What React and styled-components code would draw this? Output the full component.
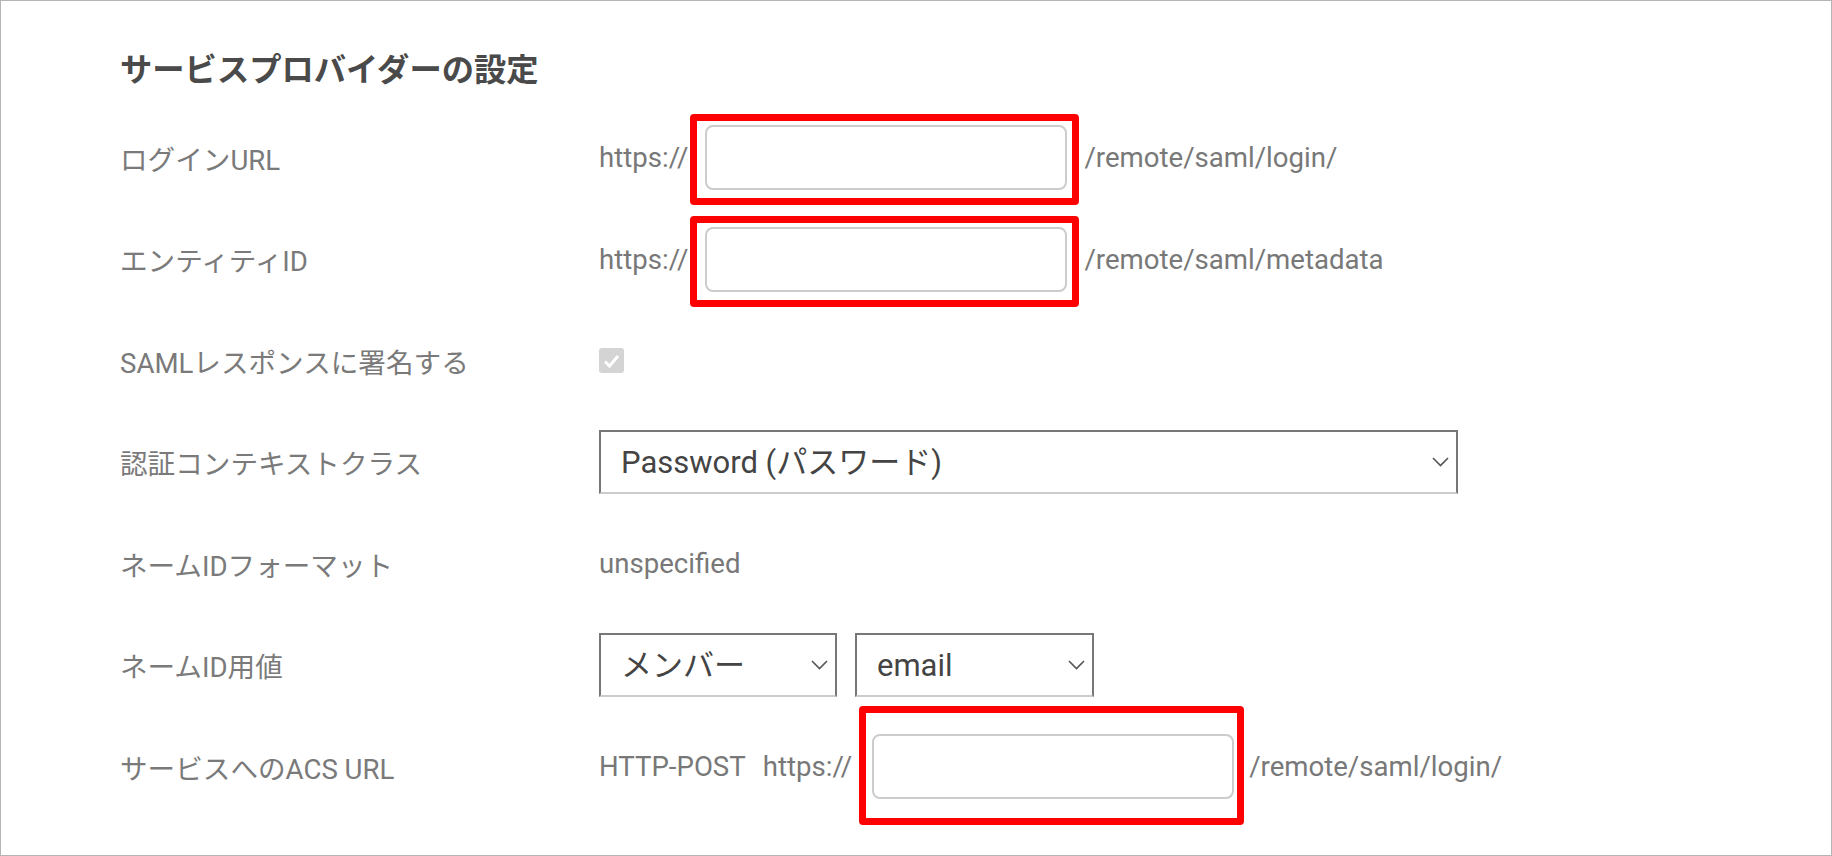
import React from 'react';
import styled, { createGlobalStyle } from 'styled-components';

const GlobalStyle = createGlobalStyle`
  html, body {
    margin: 0;
    padding: 0;
    background: #fff;
  }
  body {
    font-family: Roboto, "Noto Sans CJK JP", sans-serif;
  }
`;

// page frame
const Frame = styled.div`
  box-sizing: border-box;
  width: 100vw;
  height: 856px;
  border: 1px solid #b5b5b5;
  padding: 49px 0 0 119px;
  overflow: hidden;
`;

const Title = styled.h2`
  margin: 0 0 17px;
  font-size: 32.3px;
  line-height: 40px;
  font-weight: 700;
  color: #4a4a4a;
`;

const Row = styled.div`
  display: grid;
  grid-template-columns: 479px auto;
  align-items: center;
  height: 101.5px;
`;

const Label = styled.div`
  font-size: 27.6px;
  color: #7a7a7a;
  white-space: nowrap;
`;

const Value = styled.div`
  display: flex;
  align-items: center;
  font-size: 27.6px;
  color: #787878;
  white-space: nowrap;
`;

const Text = styled.span`
  margin-right: ${p => p.$gap || 0}px;
`;

// red annotation drawn over an input
const Highlight = styled.span`
  position: relative;
  display: inline-flex;
  margin: 0 ${p => p.$right}px 0 ${p => p.$left}px;

  &::after {
    content: '';
    position: absolute;
    top: ${p => p.$box[0]}px;
    right: ${p => p.$box[1]}px;
    bottom: ${p => p.$box[2]}px;
    left: ${p => p.$box[3]}px;
    border: 7px solid #ff0000;
    border-radius: 4px;
    pointer-events: none;
  }
`;

const Input = styled.input`
  box-sizing: border-box;
  width: 362px;
  height: 65px;
  border: 2px solid #cccccc;
  border-radius: 8px;
  background: #fff;
  outline: none;
  font-size: 27px;
`;

const CheckBox = styled.span`
  display: inline-flex;
  align-items: center;
  justify-content: center;
  width: 25px;
  height: 25px;
  border-radius: 3px;
  background: #d4d4d4;
`;

const SelectWrap = styled.span`
  position: relative;
  display: inline-flex;
  margin-right: ${p => p.$gap || 0}px;
`;

const Select = styled.select`
  appearance: none;
  box-sizing: border-box;
  width: ${p => p.$width}px;
  height: 64px;
  padding: 0 30px 0 20px;
  border: 2px solid #777;
  border-bottom-color: #cccccc;
  border-radius: 0;
  background: #fff;
  font-family: Roboto, "Noto Sans CJK JP", sans-serif;
  font-size: 31px;
  color: #444;
  outline: none;
`;

const Chevron = styled.svg`
  position: absolute;
  right: 9px;
  top: 27px;
  pointer-events: none;
`;

const Dropdown = ({ width, gap, value }) => (
  <SelectWrap $gap={gap}>
    <Select $width={width} defaultValue={value}>
      <option>{value}</option>
    </Select>
    <Chevron width="17" height="10" viewBox="0 0 17 10">
      <path d="M1 1 L8.5 8.5 L16 1" fill="none" stroke="#555" strokeWidth="1.6" />
    </Chevron>
  </SelectWrap>
);

export default function App() {
  return (
    <>
      <GlobalStyle />
      <Frame>
        <Title>サービスプロバイダーの設定</Title>

        <Row>
          <Label>ログインURL</Label>
          <Value>
            <Text>https://</Text>
            <Highlight $left={17} $right={17} $box={[-11, -12, -15, -15]}>
              <Input />
            </Highlight>
            <Text>/remote/saml/login/</Text>
          </Value>
        </Row>

        <Row>
          <Label>エンティティID</Label>
          <Value>
            <Text>https://</Text>
            <Highlight $left={17} $right={17} $box={[-11, -12, -15, -15]}>
              <Input />
            </Highlight>
            <Text>/remote/saml/metadata</Text>
          </Value>
        </Row>

        <Row>
          <Label>SAMLレスポンスに署名する</Label>
          <Value>
            <CheckBox>
              <svg width="17" height="14" viewBox="0 0 17 14">
                <path d="M2 7.5 L6.5 12 L15 2" fill="none" stroke="#fff" strokeWidth="3" />
              </svg>
            </CheckBox>
          </Value>
        </Row>

        <Row>
          <Label>認証コンテキストクラス</Label>
          <Value>
            <Dropdown width={859} value="Password (パスワード)" />
          </Value>
        </Row>

        <Row>
          <Label>ネームIDフォーマット</Label>
          <Value>unspecified</Value>
        </Row>

        <Row>
          <Label>ネームID用値</Label>
          <Value>
            <Dropdown width={238} gap={18} value="メンバー" />
            <Dropdown width={239} value="email" />
          </Value>
        </Row>

        <Row>
          <Label>サービスへのACS URL</Label>
          <Value>
            <Text $gap={17}>HTTP-POST</Text>
            <Text>https://</Text>
            <Highlight $left={20} $right={15} $box={[-28, -10, -26, -13]}>
              <Input />
            </Highlight>
            <Text>/remote/saml/login/</Text>
          </Value>
        </Row>
      </Frame>
    </>
  );
}
